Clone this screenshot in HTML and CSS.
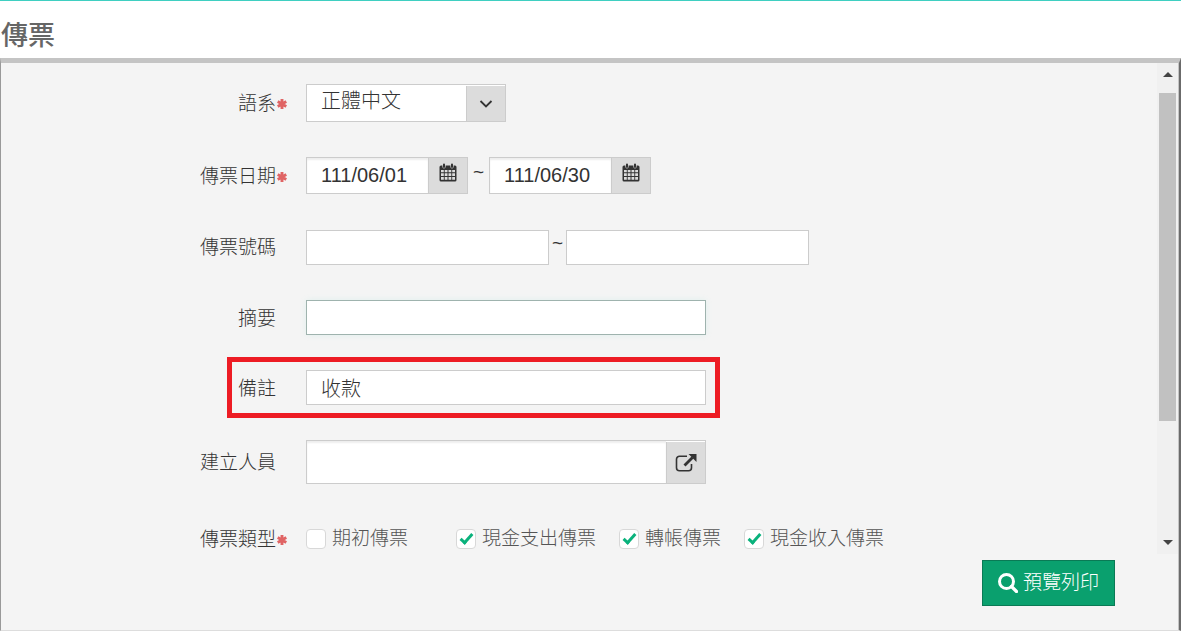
FILE: index.html
```html
<!DOCTYPE html>
<html lang="zh-Hant">
<head>
    <meta charset="UTF-8">
    <meta name="viewport" content="width=device-width, initial-scale=1.0">
    <title>傳票</title>
    <link rel="stylesheet" href="styles.css">
</head>
<body>

    <!-- 共用圖示 -->
    <svg class="icon-defs" aria-hidden="true">
        <symbol id="icon-required" viewBox="0 0 10 10">
            <path d="M5 0v10M0.700 2.500l8.600 5M9.300 2.500l-8.600 5" stroke="currentColor" stroke-width="2.900" fill="none"/>
        </symbol>
        <symbol id="icon-calendar" viewBox="0 0 18 19">
            <path d="M2 2.500h14a1.500 1.500 0 0 1 1.500 1.500v13a1.500 1.500 0 0 1-1.500 1.500h-14a1.500 1.500 0 0 1-1.500-1.500v-13a1.500 1.500 0 0 1 1.500-1.500z" fill="currentColor"/>
            <path d="M2 7h2.800v2.200h-2.800zM5.700 7h2.800v2.200h-2.800zM9.500 7h2.800v2.200h-2.800zM13.200 7h2.800v2.200h-2.800zM2 10.200h2.800v2.800h-2.800zM5.700 10.200h2.800v2.800h-2.800zM9.500 10.200h2.800v2.800h-2.800zM13.200 10.200h2.800v2.800h-2.800zM2 14h2.800v2.800h-2.800zM5.700 14h2.800v2.800h-2.800zM9.500 14h2.800v2.800h-2.800zM13.200 14h2.800v2.800h-2.800z" fill="#dcdcdc"/>
            <path d="M5 1.800v2M13 1.800v2" stroke="#dcdcdc" stroke-width="3.200" stroke-linecap="round"/>
            <path d="M5 1.500v2.500M13 1.500v2.500" stroke="currentColor" stroke-width="2" stroke-linecap="round"/>
        </symbol>
    </svg>

    <header class="page-header">
        <h1>傳票</h1>
    </header>

    <main class="panel">
        <div class="panel-scroll">
            <form id="voucherForm" class="voucher-form">
                <div class="form-row">
                    <label class="row-label" for="lang">語系<svg class="required"><use href="#icon-required"/></svg></label>
                    <div class="select-box">
                        <select id="lang">
                            <option>正體中文</option>
                            <option>English</option>
                        </select>
                        <span class="select-arrow">
                            <svg width="14" height="8" viewBox="0 0 14 8"><path d="M1.500 1l5.500 5.500L12.500 1" fill="none" stroke="#333" stroke-width="1.800"/></svg>
                        </span>
                    </div>
                </div>

                <div class="form-row">
                    <label class="row-label" for="dateFrom">傳票日期<svg class="required"><use href="#icon-required"/></svg></label>
                    <div class="range">
                        <div class="addon-box date-box">
                            <input type="text" id="dateFrom" value="111/06/01">
                            <button type="button" aria-label="開始日期"><svg class="calendar"><use href="#icon-calendar"/></svg></button>
                        </div>
                        <span class="tilde">~</span>
                        <div class="addon-box date-box">
                            <input type="text" id="dateTo" aria-label="結束日期" value="111/06/30">
                            <button type="button" aria-label="結束日期"><svg class="calendar"><use href="#icon-calendar"/></svg></button>
                        </div>
                    </div>
                </div>

                <div class="form-row">
                    <label class="row-label" for="noFrom">傳票號碼</label>
                    <div class="range">
                        <input type="text" class="text-box number-box" id="noFrom">
                        <span class="tilde tilde-tight">~</span>
                        <input type="text" class="text-box number-box" id="noTo" aria-label="傳票號碼">
                    </div>
                </div>

                <div class="form-row">
                    <label class="row-label" for="summary">摘要</label>
                    <input type="text" class="text-box active" id="summary">
                </div>

                <div class="form-row marked">
                    <label class="row-label" for="remark">備註</label>
                    <input type="text" class="text-box" id="remark" value="收款">
                </div>

                <div class="form-row">
                    <label class="row-label" for="creator">建立人員</label>
                    <div class="addon-box picker-box">
                        <input type="text" id="creator">
                        <button type="button" aria-label="選擇人員">
                            <svg width="22" height="18" viewBox="0 0 22 18">
                                <path d="M12 2.200H4.500a3 3 0 0 0-3 3v8.500a3 3 0 0 0 3 3h9a3 3 0 0 0 3-3V10" fill="none" stroke="#333" stroke-width="1.600"/>
                                <path d="M9.500 11.500l8-8" stroke="#333" stroke-width="2.800"/>
                                <path d="M13.500 0H21.500V8z" fill="#333"/>
                            </svg>
                        </button>
                    </div>
                </div>

                <div class="form-row type-row">
                    <span class="row-label" id="typeLabel">傳票類型<svg class="required"><use href="#icon-required"/></svg></span>
                    <div class="checks" role="group" aria-labelledby="typeLabel">
                        <label class="check check-wide"><input type="checkbox"><span>期初傳票</span></label>
                        <label class="check"><input type="checkbox" checked><span>現金支出傳票</span></label>
                        <label class="check"><input type="checkbox" checked><span>轉帳傳票</span></label>
                        <label class="check"><input type="checkbox" checked><span>現金收入傳票</span></label>
                    </div>
                </div>
            </form>

            <!-- 捲軸 -->
            <div class="scrollbar" aria-hidden="true">
                <span class="arrow arrow-up"></span>
                <div class="track"><div class="thumb"></div></div>
                <span class="arrow arrow-down"></span>
            </div>
        </div>

        <footer class="panel-footer">
            <button type="submit" form="voucherForm" class="btn-print">
                <svg width="20" height="20" viewBox="0 0 20 20"><circle cx="8.500" cy="8.500" r="7" fill="none" stroke="#fff" stroke-width="3"/><path d="M13.500 13.500l5 5" stroke="#fff" stroke-width="3.200" stroke-linecap="round"/></svg>
                <span>預覽列印</span>
            </button>
        </footer>
    </main>

</body>
</html>
```

FILE: styles.css
```css
*, *::before, *::after {
    margin: 0;
    padding: 0;
    box-sizing: border-box;
}

body {
    display: flex;
    flex-direction: column;
    height: 100vh;
    border-top: 1px solid #3fcfc1;
    background-color: #fff;
    color: #333;
    font-family: "Liberation Sans", "Noto Sans CJK TC", sans-serif;
    font-size: 19px;
    font-weight: 300;
    line-height: 28px;
}

input, select, button {
    font: inherit;
    color: inherit;
}

svg {
    flex: none;
}

.icon-defs {
    position: absolute;
    width: 0;
    height: 0;
}

/* 標題 */
.page-header {
    padding: 15px 1px 2px;
}

.page-header h1 {
    color: #666;
    font-size: 27px;
    font-weight: 500;
    line-height: 40px;
}

/* 主面板 */
.panel {
    flex: 1;
    min-height: 0;
    display: flex;
    flex-direction: column;
    border-style: solid;
    border-width: 5px 2px 1px 1px;
    border-color: #c4c4c4 #6b6b6b #ddd #999;
    box-shadow: inset -1px 0 #c4c4c4;
    padding-right: 1px;
    background-color: #f4f4f4;
}

.panel-scroll {
    flex: 1;
    min-height: 0;
    display: flex;
}

.voucher-form {
    flex: 1;
    display: flex;
    flex-direction: column;
    gap: 35px;
    padding-top: 21px;
    overflow: hidden;
}

.form-row {
    flex: none;
    display: grid;
    grid-template-columns: 287px 1fr;
    column-gap: 18px;
    align-items: center;
    position: relative;
}

.row-label {
    position: relative;
    padding: 2px 12px 0 0;
    text-align: right;
}

.required {
    position: absolute;
    right: 1px;
    top: 11px;
    width: 10px;
    height: 10px;
    color: #e06464;
}

/* 紅框標示 */
.marked::after {
    content: "";
    position: absolute;
    top: -13px;
    bottom: -13px;
    left: 226px;
    width: 493px;
    border: 5px solid #ed1c24;
    pointer-events: none;
}

/* 輸入欄位 */
.text-box {
    width: 400px;
    height: 35px;
    padding: 0 14px;
    border: 1px solid #ccc;
    background-color: #fff;
    font-size: 20px;
    outline: none;
}

.number-box {
    width: 243px;
}

.text-box.active {
    border-color: #9fb3ae;
    box-shadow: 0 0 6px rgba(120, 220, 210, 0.15);
}

.select-box {
    position: relative;
    width: 200px;
    height: 38px;
    border: 1px solid #ccc;
    background-color: #fff;
}

.select-box select {
    width: 100%;
    height: 100%;
    padding: 0 54px 4px 14px;
    border: none;
    background: none;
    font-size: 20px;
    appearance: none;
    outline: none;
}

.select-arrow {
    position: absolute;
    top: 1px;
    right: 0;
    bottom: 0;
    width: 39px;
    display: flex;
    align-items: center;
    justify-content: center;
    border-left: 1px solid #ccc;
    background-color: #dcdcdc;
    pointer-events: none;
}

.addon-box {
    display: flex;
    border: 1px solid #ccc;
    background-color: #fff;
}

.addon-box input {
    flex: 1;
    min-width: 0;
    padding: 0 14px 2px;
    border: none;
    background: none;
    box-shadow: inset 0 2px 2px rgba(0, 0, 0, 0.07);
    font-size: 20px;
    outline: none;
}

.addon-box button {
    width: 39px;
    display: flex;
    align-items: center;
    justify-content: center;
    border: none;
    border-left: 1px solid #ccc;
    background-color: #dcdcdc;
}

.date-box {
    width: 162px;
    height: 37px;
}

.date-box button {
    padding-bottom: 6px;
}

.calendar {
    width: 18px;
    height: 19px;
}

.picker-box {
    width: 400px;
    height: 44px;
}

.picker-box button {
    margin-top: 1px;
}

.range {
    display: flex;
    align-items: center;
}

.tilde {
    width: 21px;
    padding-bottom: 8px;
    text-align: center;
}

.tilde-tight {
    width: 17px;
}

/* 核取方塊 */
.type-row {
    height: 40px;
}

.checks {
    display: flex;
}

.check {
    display: flex;
    align-items: center;
    gap: 6px;
    padding-right: 23px;
    color: #555;
}

.check-wide {
    min-width: 150px;
}

.check input {
    width: 20px;
    height: 20px;
    border: 1px solid #d8d8d8;
    border-radius: 4px;
    background-color: #fff;
    appearance: none;
}

.check input:checked::before {
    content: "";
    display: block;
    width: 7px;
    height: 13px;
    margin: 1px 0 0 6px;
    border: solid #0ab27c;
    border-width: 0 3px 3px 0;
    transform: rotate(42deg);
}

/* 捲軸 */
.scrollbar {
    width: 21px;
    display: flex;
    flex-direction: column;
    align-items: center;
    padding: 9px 0;
    background-color: #f0f0f0;
}

.arrow {
    border: 5px solid transparent;
}

.arrow-up {
    border-top: none;
    border-bottom-color: #444;
}

.arrow-down {
    border-bottom: none;
    border-top-color: #444;
}

.track {
    flex: 1;
    padding: 16px 0;
}

.thumb {
    width: 17px;
    height: 76%;
    background-color: #c1c1c1;
}

/* 按鈕列 */
.panel-footer {
    display: flex;
    justify-content: flex-end;
    padding: 6px 63px 24px;
}

.btn-print {
    display: flex;
    align-items: center;
    gap: 5px;
    height: 46px;
    padding: 0 15px;
    border: 1px solid #0a7a55;
    background-color: #0aa06e;
    color: #fff;
    cursor: pointer;
}
```
